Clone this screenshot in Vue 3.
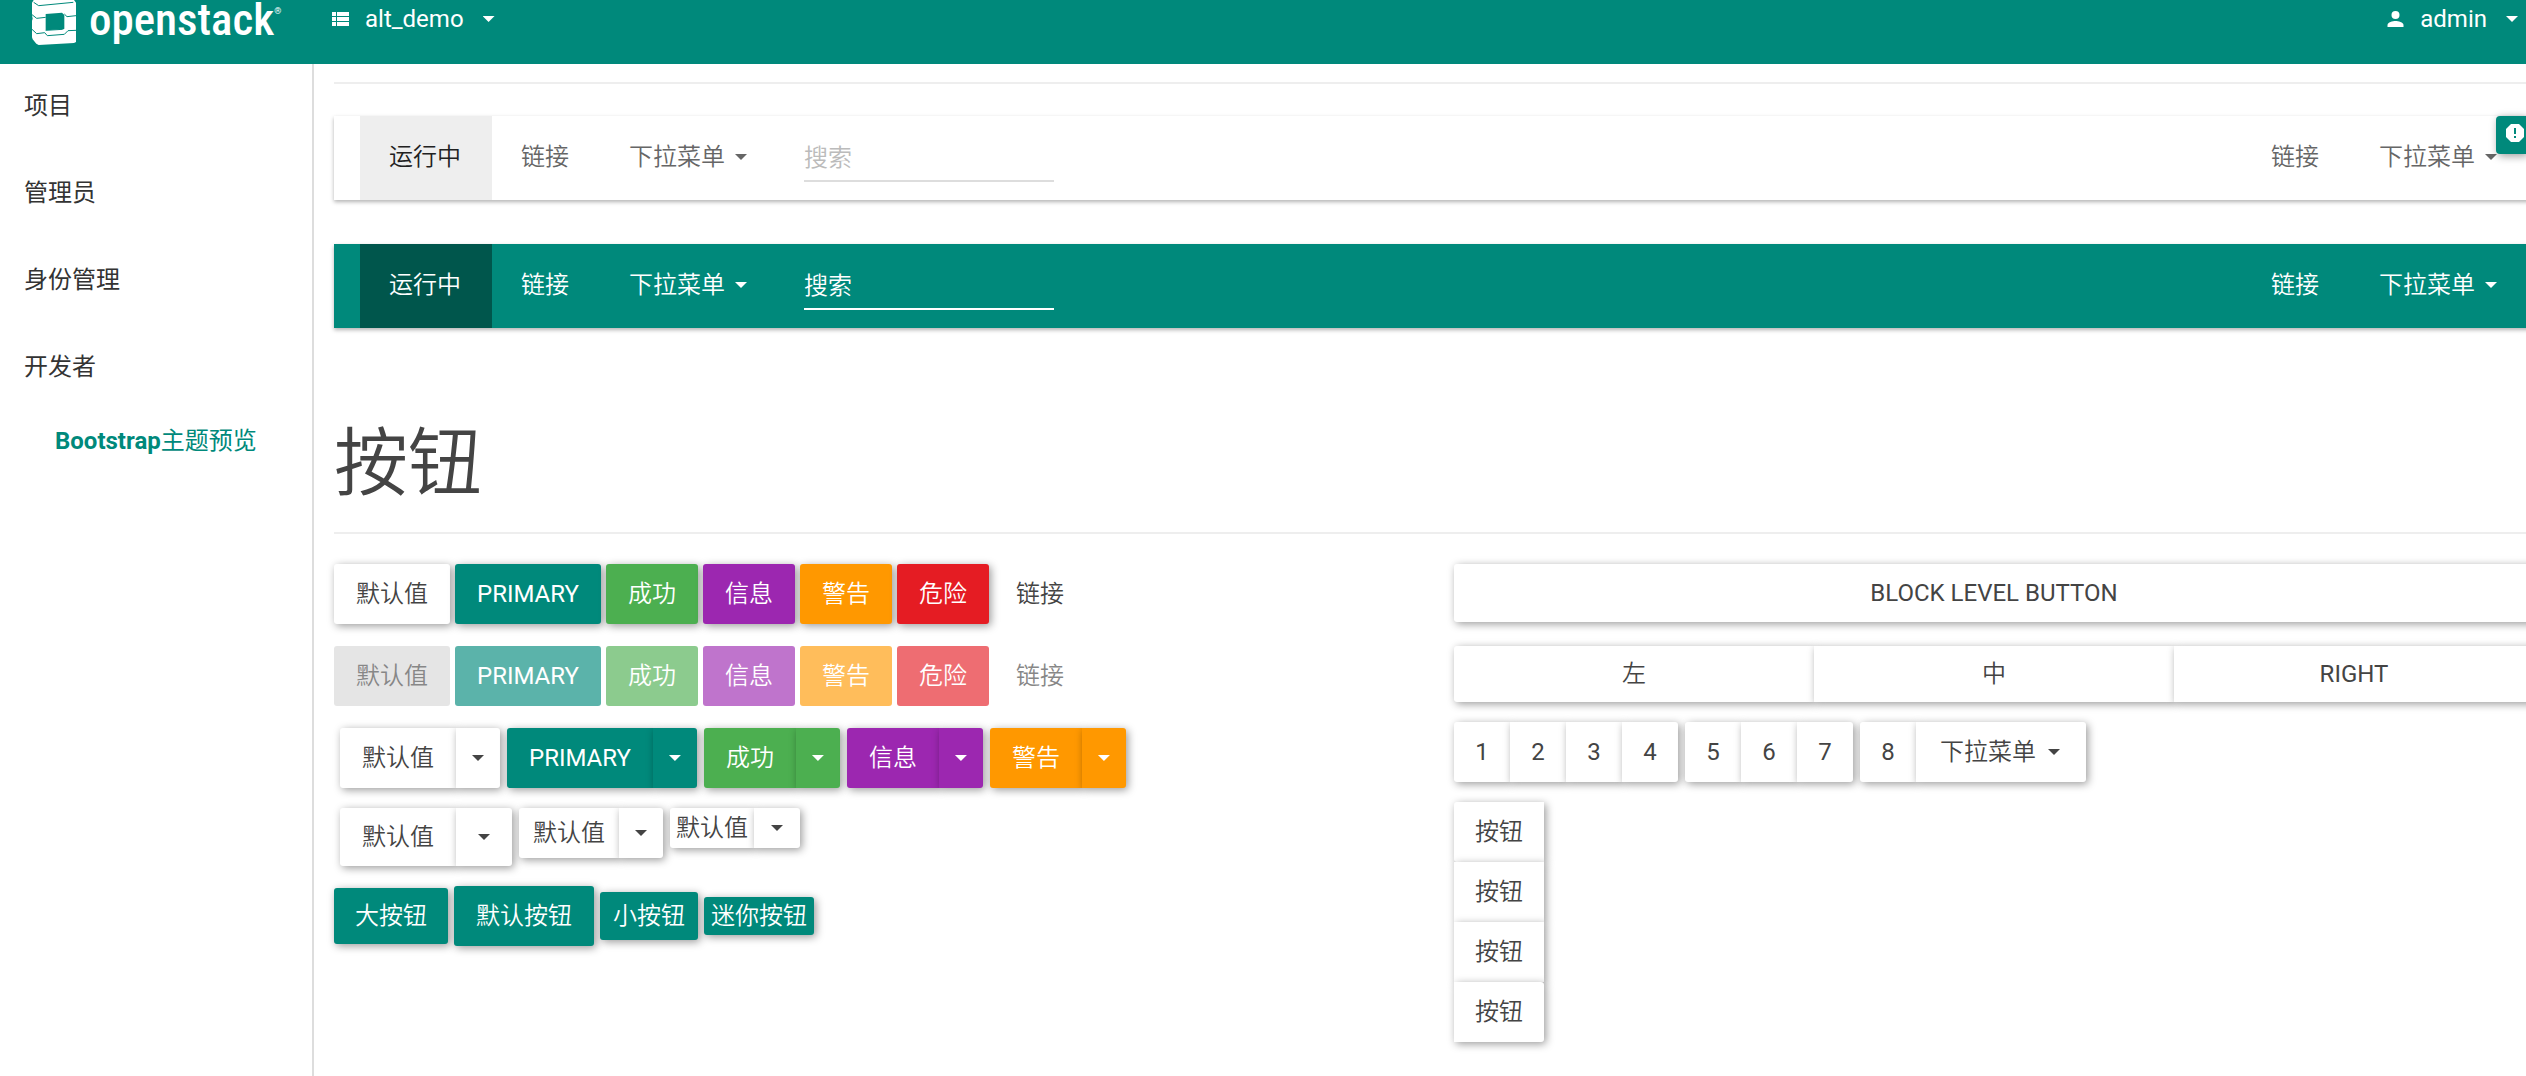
<script setup>
const sideItems = ['项目', '管理员', '身份管理', '开发者']

const buttons = [
  { label: '默认值', kind: 'default' },
  { label: 'PRIMARY', kind: 'primary' },
  { label: '成功', kind: 'success' },
  { label: '信息', kind: 'info' },
  { label: '警告', kind: 'warning' },
  { label: '危险', kind: 'danger' },
  { label: '链接', kind: 'link' },
]

const splitButtons = buttons.slice(0, 5)
const splitSizes = ['lg', 'sm', 'xs']

const sizedButtons = [
  { label: '大按钮', size: 'lg' },
  { label: '默认按钮', size: 'md' },
  { label: '小按钮', size: 'sm' },
  { label: '迷你按钮', size: 'xs' },
]

const navbars = ['light', 'inverse']
const pages = [[1, 2, 3, 4], [5, 6, 7]]
</script>

<template>
  <div class="shell">
    <header class="topbar">
      <a class="brand" href="#">
        <svg class="brand-mark" viewBox="36 0 132 135" aria-hidden="true">
          <path fill="#fff" d="M41 0H162L168 8V126L162 129L56 135L49 131L38 118L36 112V62L38 56L36 46V8Z" />
          <path class="cut" d="M77 42L126 38L133 45V86L128 89L77 91Z" />
          <path fill="#fff" d="M77 91L128 88L140 97L134 104L82 107L74 98Z" />
          <path class="seam" d="M41 7L56 17L160 7" />
          <path class="seam" d="M36 44L50 55L77 52M133 42L141 50L168 47M36 88L50 101L74 98L82 107L133 103L144 92L168 91M77 91L128 88" />
        </svg>
        <span class="brand-name">openstack</span>
        <sup class="brand-reg">®</sup>
      </a>
      <a class="top-link" href="#">
        <svg class="icon-list" viewBox="0 0 17 14" aria-hidden="true">
          <path fill="#fff" d="M0 0h4v4H0zM5 0h12v4H5zM0 5h4v4H0zM5 5h12v4H5zM0 10h4v4H0zM5 10h12v4H5z" />
        </svg>
        <span>alt_demo</span>
        <i class="caret"></i>
      </a>
      <a class="top-link user" href="#">
        <svg class="icon-user" viewBox="0 0 16 16" aria-hidden="true">
          <circle cx="8" cy="4" r="4" fill="#fff" />
          <path fill="#fff" d="M0 16v-2c0-2.700 5.300-4 8-4s8 1.300 8 4v2z" />
        </svg>
        <span>admin</span>
        <i class="caret"></i>
      </a>
    </header>

    <div class="layout">
      <nav class="sidebar">
        <a v-for="item in sideItems" :key="item" class="side-item" href="#">{{ item }}</a>
        <a class="side-sub" href="#"><b>Bootstrap</b>主题预览</a>
      </nav>

      <main class="main">
        <hr class="rule" />

        <nav v-for="kind in navbars" :key="kind" class="navbar" :class="kind">
          <a class="nav-link active" href="#">运行中</a>
          <a class="nav-link" href="#">链接</a>
          <a class="nav-link" href="#">下拉菜单<i class="caret"></i></a>
          <input class="nav-search" type="text" placeholder="搜索" aria-label="搜索" />
          <a class="nav-link push" href="#">链接</a>
          <a class="nav-link" href="#">下拉菜单<i class="caret"></i></a>
        </nav>

        <h1 class="title">按钮</h1>

        <div class="columns">
          <section class="column">
            <div class="row wide">
              <button v-for="b in buttons" :key="b.kind" type="button" class="btn" :class="b.kind">{{ b.label }}</button>
            </div>
            <div class="row wide">
              <button v-for="b in buttons" :key="b.kind" type="button" class="btn" :class="b.kind" disabled>{{ b.label }}</button>
            </div>
            <div class="row groups">
              <div v-for="b in splitButtons" :key="b.kind" class="group">
                <button type="button" class="btn" :class="b.kind">{{ b.label }}</button>
                <button type="button" class="btn toggle" :class="b.kind" aria-label="展开"><i class="caret"></i></button>
              </div>
            </div>
            <div class="row groups">
              <div v-for="s in splitSizes" :key="s" class="group split" :class="s">
                <button type="button" class="btn default">默认值</button>
                <button type="button" class="btn default toggle" aria-label="展开"><i class="caret"></i></button>
              </div>
            </div>
            <div class="row sizes">
              <button v-for="b in sizedButtons" :key="b.size" type="button" class="btn primary" :class="b.size">{{ b.label }}</button>
            </div>
          </section>

          <section class="column">
            <button type="button" class="btn default block">BLOCK LEVEL BUTTON</button>
            <div class="group justified">
              <button type="button" class="btn default">左</button>
              <button type="button" class="btn default">中</button>
              <button type="button" class="btn default">RIGHT</button>
            </div>
            <div class="row toolbar">
              <div v-for="(set, i) in pages" :key="i" class="group">
                <button v-for="n in set" :key="n" type="button" class="btn default page">{{ n }}</button>
              </div>
              <div class="group">
                <button type="button" class="btn default page">8</button>
                <button type="button" class="btn default menu">下拉菜单<i class="caret"></i></button>
              </div>
            </div>
            <div class="group vertical">
              <button v-for="n in 4" :key="n" type="button" class="btn default">按钮</button>
            </div>
          </section>
        </div>
      </main>
    </div>

    <button type="button" class="alert-tab" aria-label="消息">
      <svg viewBox="0 0 18 18" aria-hidden="true">
        <path fill="#fff" d="M5 0h8l5 5v8l-5 5H5l-5-5V5z" />
        <path class="cut" d="M8 4h2v6H8zM8 12h2v2H8z" />
      </svg>
    </button>
  </div>
</template>

<style>
body {
  margin: 0;
  background: #fff;
}
</style>

<style scoped>
.shell {
  position: relative;
  min-height: 100vh;
  display: flex;
  flex-direction: column;
  overflow: hidden;
  font-family: Roboto, "Noto Sans CJK SC DemiLight", "Noto Sans CJK SC", sans-serif;
  font-size: 24px;
  line-height: 34px;
  color: #444;
}

.shell * {
  box-sizing: border-box;
}

a {
  color: inherit;
  text-decoration: none;
}

.caret {
  flex: none;
  width: 12px;
  height: 6px;
  background: currentColor;
  clip-path: polygon(0 0, 100% 0, 50% 100%);
}

.cut {
  fill: #00897b;
}

.seam {
  fill: none;
  stroke: #00897b;
  stroke-width: 3;
}

/* Top bar */
.topbar {
  display: flex;
  align-items: flex-start;
  height: 64px;
  padding: 0 8px 0 32px;
  background: #00897b;
  color: #fff;
}

.brand {
  display: flex;
  align-items: flex-start;
  width: 300px;
}

.brand-mark {
  width: 44px;
  height: 45px;
  margin-right: 13px;
}

.brand-name {
  font-family: "Roboto Condensed", "Noto Sans Condensed", "Open Sans Condensed", "Liberation Sans", sans-serif;
  font-size: 45px;
  font-weight: 500;
  line-height: 40px;
}

.brand-reg {
  font-size: 9px;
  line-height: 22px;
}

.top-link {
  display: flex;
  align-items: center;
  height: 38px;
}

.top-link .caret {
  margin-left: 19px;
}

.icon-list {
  width: 17px;
  height: 14px;
  margin-right: 16px;
}

.icon-user {
  width: 17px;
  height: 16px;
  margin-right: 16px;
}

.user {
  margin-left: auto;
}

/* Page body */
.layout {
  flex: 1;
  display: flex;
}

.sidebar {
  flex: none;
  display: flex;
  flex-direction: column;
  width: 314px;
  border-right: 2px solid #ddd;
  color: #333;
  font-family: Roboto, "Noto Sans CJK SC", sans-serif;
}

.side-item {
  padding: 25px 24px 28px;
}

.side-sub {
  padding: 12px 0 16px 55px;
  color: #00897b;
}

.main {
  flex: 1;
  min-width: 0;
  margin-right: -28px;
  padding: 18px 20px;
}

.rule {
  height: 2px;
  margin: 0 0 32px;
  border: 0;
  background: #eee;
}

/* Navbars */
.navbar {
  display: flex;
  height: 84px;
  margin-bottom: 44px;
  padding: 0 6px 0 26px;
  box-shadow: 0 2px 4px rgba(0, 0, 0, 0.3);
  color: #666;
}

.nav-link {
  display: flex;
  align-items: center;
  padding: 0 31px 2px 29px;
}

.nav-link .caret {
  margin-left: 10px;
}

.active {
  background: #eee;
  color: #212121;
}

.push {
  margin-left: auto;
}

.nav-search {
  width: 250px;
  height: 48px;
  margin: 18px 0 0 26px;
  padding: 2px 0 0;
  border: 0;
  border-bottom: 2px solid #ddd;
  background: transparent;
  color: inherit;
  font: inherit;
}

.nav-search::placeholder {
  color: #bbb;
  opacity: 1;
}

.inverse {
  background: #00897b;
  color: #fff;
}

.inverse .active {
  background: #00564c;
  color: #fff;
}

.inverse .nav-search {
  border-color: #fff;
}

.inverse .nav-search::placeholder {
  color: #fff;
}

.title {
  margin: 96px 0 30px;
  padding-bottom: 28px;
  border-bottom: 2px solid #eee;
  font-size: 74px;
  line-height: 80px;
  font-weight: 400;
}

/* Buttons */
.columns {
  display: grid;
  grid-template-columns: 1fr 1fr;
  column-gap: 40px;
}

.row {
  display: flex;
  align-items: flex-start;
}

.wide {
  gap: 5px;
  margin-bottom: 22px;
}

.groups {
  gap: 7px;
  margin: 0 0 20px 6px;
}

.sizes {
  align-items: center;
  gap: 6px;
}

.btn {
  display: flex;
  align-items: center;
  justify-content: center;
  height: 60px;
  padding: 0 22px;
  border: 0;
  border-radius: 3px;
  box-shadow: 2px 2px 8px rgba(0, 0, 0, 0.4);
  font: inherit;
  white-space: nowrap;
}

.default {
  background: #fff;
  color: #444;
}

.primary {
  background: #00897b;
  color: #fff;
}

.success {
  background: #4caf50;
  color: #fff;
}

.info {
  background: #9c27b0;
  color: #fff;
}

.warning {
  background: #ff9800;
  color: #fff;
}

.danger {
  background: #e51c23;
  color: #fff;
}

.link {
  background: transparent;
  box-shadow: none;
  color: #444;
}

.btn:disabled {
  box-shadow: none;
  opacity: 0.64;
}

.default:disabled {
  background: #d7d7d7;
}

.lg {
  height: 56px;
  padding: 0 21px;
}

.sm {
  height: 48px;
  padding: 0 13px;
}

.xs {
  height: 38px;
  padding: 0 7px;
}

.group {
  display: flex;
}

.group .btn:not(:last-child) {
  border-top-right-radius: 0;
  border-bottom-right-radius: 0;
}

.group .btn:not(:first-child) {
  border-top-left-radius: 0;
  border-bottom-left-radius: 0;
}

.group .toggle {
  width: 44px;
  padding: 0;
}

.split {
  height: auto;
  padding: 0;
}

.split.lg .btn {
  height: 58px;
}

.split.lg .toggle {
  width: 56px;
}

.split.sm .btn {
  height: 50px;
}

.split.sm .btn:first-child {
  padding: 0 14px;
}

.split.xs .btn {
  height: 40px;
}

.split.xs .btn:first-child {
  padding: 0 6px;
}

.split.xs .toggle {
  width: 46px;
}

.block {
  width: 100%;
  height: 58px;
  margin-bottom: 24px;
}

.justified {
  margin-bottom: 20px;
}

.justified .btn {
  flex: 1;
  height: 56px;
}

.toolbar {
  gap: 7px;
  margin-bottom: 20px;
}

.page {
  width: 56px;
  padding: 0;
}

.menu {
  gap: 12px;
  padding: 0 26px 0 24px;
}

.vertical {
  flex-direction: column;
  width: 90px;
}

.vertical .btn {
  padding: 0;
}

/* Message tab on the right edge */
.alert-tab {
  position: absolute;
  top: 116px;
  right: 0;
  width: 30px;
  height: 38px;
  padding: 8px 2px 12px 10px;
  border: 0;
  border-radius: 4px 0 0 4px;
  background: #00897b;
  box-shadow: 2px 2px 8px rgba(0, 0, 0, 0.4);
}

.alert-tab svg {
  display: block;
  width: 18px;
  height: 18px;
}
</style>
